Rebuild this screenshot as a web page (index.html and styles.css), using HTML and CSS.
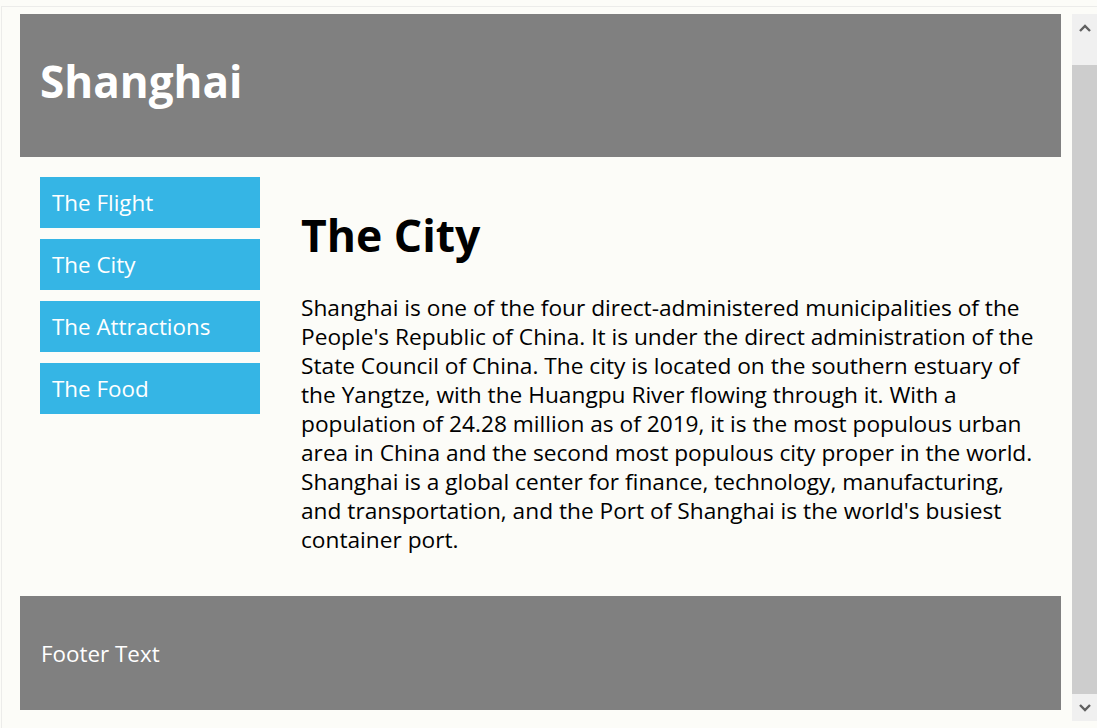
FILE: index.html
```html
<!DOCTYPE html>
<html lang="en">
<head>
  <meta charset="UTF-8">
  <title>Shanghai</title>
  <link rel="stylesheet" href="styles.css">
</head>
<body>
<div class="frame">
  <div class="page">
    <!-- ヘッダー -->
    <header class="header">
      <h1 class="site-title">Shanghai</h1>
    </header>

    <!-- メニューと本文 -->
    <div class="row">
      <nav class="menu">
        <a href="#" class="menu-item">The Flight</a>
        <a href="#" class="menu-item">The City</a>
        <a href="#" class="menu-item">The Attractions</a>
        <a href="#" class="menu-item">The Food</a>
      </nav>

      <main class="content">
        <h1>The City</h1>
        <p>Shanghai is one of the four direct-administered municipalities of the People's Republic of China. It is under the direct administration of the State Council of China. The city is located on the southern estuary of the Yangtze, with the Huangpu River flowing through it. With a population of 24.28 million as of 2019, it is the most populous urban area in China and the second most populous city proper in the world. Shanghai is a global center for finance, technology, manufacturing, and transportation, and the Port of Shanghai is the world's busiest container port.</p>
      </main>
    </div>

    <!-- フッター -->
    <footer class="footer">
      <p>Footer Text</p>
    </footer>
  </div>

  <!-- スクロールバー -->
  <div class="scrollbar">
    <div class="scroll-btn">
      <svg width="12" height="8" viewBox="0 0 12 8"><path d="M1 7 L6 2 L11 7" fill="none" stroke="#606060" stroke-width="2.4"/></svg>
    </div>
    <div class="scroll-thumb"></div>
    <div class="scroll-btn">
      <svg width="12" height="8" viewBox="0 0 12 8"><path d="M1 1 L6 6 L11 1" fill="none" stroke="#606060" stroke-width="2.4"/></svg>
    </div>
  </div>
</div>
</body>
</html>
```

FILE: styles.css
```css
body {
  margin: 0;
  background-color: #fcfcf8;
  font-family: "Open Sans", "Noto Sans", sans-serif;
  overflow: hidden;
}

/* 外枠 */
.frame {
  margin: 6px 0 0 1px;
  padding-top: 7px;
  border-top: 1px solid #ececea;
  border-left: 1px solid #ececea;
  display: flex;
  height: 714px;
}

.page {
  flex: 1;
  padding: 0 11px 0 18px;
}

/* ヘッダー */
.header {
  background-color: #808080;
  height: 143px;
  padding: 0 20px 10px 20px;
  box-sizing: border-box;
  display: flex;
  align-items: center;
}

.site-title {
  margin: 0;
  color: #fff;
  font-size: 44px;
  font-weight: 700;
}

/* メニューと本文 */
.row {
  display: flex;
  gap: 41px;
  padding: 20px 20px 0 20px;
  height: 419px;
}

.menu {
  width: 220px;
  display: flex;
  flex-direction: column;
  gap: 11px;
}

.menu-item {
  display: block;
  background-color: #35b5e5;
  color: #fff;
  text-decoration: none;
  font-size: 22.4px;
  height: 51px;
  line-height: 51px;
  padding-left: 12px;
}

.content {
  flex: 1;
}

.content h1 {
  margin: 28px 0 0 0;
  font-size: 44.5px;
  line-height: 60px;
  font-weight: 700;
  color: #000;
}

.content p {
  margin: 28px 0 0 0;
  font-size: 22.7px;
  line-height: 29px;
  color: #000;
}

/* フッター */
.footer {
  background-color: #808080;
  height: 114px;
  padding: 0 21px;
  display: flex;
  align-items: center;
}

.footer p {
  margin: 0;
  color: #fff;
  font-size: 22.4px;
}

/* スクロールバー */
.scrollbar {
  width: 25px;
  height: 707px;
  display: flex;
  flex-direction: column;
  background-color: #cdcdcd;
}

.scroll-btn {
  height: 51px;
  background-color: #f0f0f0;
  display: flex;
  justify-content: center;
  padding-top: 10px;
  box-sizing: border-box;
}

.scroll-btn:last-child {
  height: 27px;
  padding-top: 10px;
}

.scroll-thumb {
  flex: 1;
}
```
